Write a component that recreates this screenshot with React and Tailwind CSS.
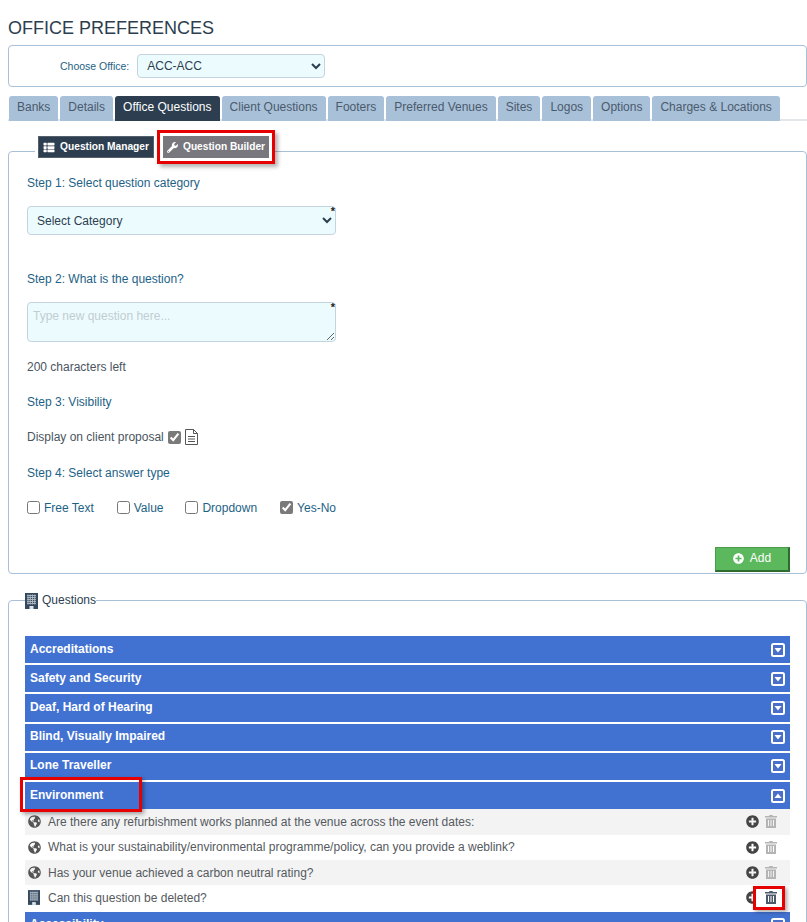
import React from 'react';
import { FaThList, FaWrench, FaPlusCircle, FaGlobeAmericas } from 'react-icons/fa';

const tabs = ['Banks', 'Details', 'Office Questions', 'Client Questions', 'Footers', 'Preferred Venues', 'Sites', 'Logos', 'Options', 'Charges & Locations'];

const categories = ['Accreditations', 'Safety and Security', 'Deaf, Hard of Hearing', 'Blind, Visually Impaired', 'Lone Traveller'];

const questions = [
    { text: 'Are there any refurbishment works planned at the venue across the event dates:', icon: 'globe' },
    { text: 'What is your sustainability/environmental programme/policy, can you provide a weblink?', icon: 'globe' },
    { text: 'Has your venue achieved a carbon neutral rating?', icon: 'globe' },
    { text: 'Can this question be deleted?', icon: 'building', deletable: true },
];

const BuildingIcon = ({ className }) => (
    <svg viewBox="0 0 13 16" className={className} fill="none">
        <rect x="0" y="0" width="13" height="16" fill="#34495e" />
        <path d="M2 2.5h9M2 4.5h9M2 6.5h9M2 8.5h9M2 10.5h9M3 1.5v10M5.25 1.5v10M7.5 1.5v10M9.75 1.5v10" stroke="#a9b4bf" strokeWidth="1" />
        <rect x="4.5" y="13" width="4" height="3" fill="#dfe4e8" />
    </svg>
);

const TrashIcon = ({ className }) => (
    <svg viewBox="0 0 12 13" className={className} fill="currentColor">
        <path d="M4.5 0h3l.5 1H12v1.5H0V1h4z" />
        <path fillRule="evenodd" d="M1 3.5h10V13H1zM3 5v6h1V5zM5.5 5v6h1V5zM8 5v6h1V5z" />
    </svg>
);

const DocIcon = ({ className }) => (
    <svg viewBox="0 0 13 16" className={className} fill="none" stroke="#555555" strokeWidth="1">
        <path d="M.5.5h8l4 4v11H.5z" />
        <path d="M8.5.5v4h4M3 7.5h7M3 10h7M3 12.5h7" />
    </svg>
);

const ToggleIcon = ({ open }) => (
    <svg viewBox="0 0 14 14" className="h-[14px] w-[14px]">
        <rect x="1" y="1" width="12" height="12" rx="1.5" fill="#4a6fc9" stroke="#ffffff" strokeWidth="2" />
        <path d={open ? 'M7 4.5l3.5 4.5h-7z' : 'M3.5 5h7L7 9.5z'} fill="#ffffff" />
    </svg>
);

const Required = () => (
    <span className="absolute right-[1px] top-[0px] text-[11px] font-bold leading-[11px] text-[#222]">*</span>
);

const Check = ({ label, checked, className }) => (
    <label className={`flex items-center whitespace-nowrap ${className}`}>
        <input type="checkbox" defaultChecked={checked} className="m-0 h-[13px] w-[13px] accent-[#7a7a7a]" />
        <span className="ml-1 mt-[1px]">{label}</span>
    </label>
);

const CategoryRow = ({ label, open }) => (
    <div className="flex h-[27.2px] items-center justify-between bg-[#4272d1] pr-[5px] text-xs font-bold text-white">
        <span className="pb-[2px] pl-[5px]">{label}</span>
        <ToggleIcon open={open} />
    </div>
);

const App = () => {
    return (
        <div className="h-[922px] overflow-hidden bg-white pl-2 font-['Liberation_Sans',Arial,sans-serif] text-xs text-[#1d6285]">
            <h1 className="h-[45px] pt-[18px] text-[18px] leading-[21px] text-[#2c3e50]">OFFICE PREFERENCES</h1>

            <div className="flex h-[42px] items-center rounded border border-[#a9c0d9] pl-[51px]">
                <span className="text-[10.5px]">Choose Office:</span>
                <select className="ml-2 h-[24px] w-[188px] rounded border border-[#c5d3de] bg-[#ecfcfe] pl-[5px] text-xs text-[#2c3e50]" defaultValue="ACC-ACC">
                    <option>ACC-ACC</option>
                </select>
            </div>

            <div className="mt-[9px] flex h-[25px] gap-[2px] border-b-2 border-[#e4e7ea] pl-px">
                {tabs.map((tab) => (
                    <div
                        key={tab}
                        className={`flex h-[25px] items-center rounded-t-[3px] px-2 pb-1 ${tab === 'Office Questions' ? 'bg-[#2c3e50] text-white' : 'bg-[#a9c0d9] text-[#4a5b6c]'}`}
                    >
                        {tab}
                    </div>
                ))}
            </div>

            <fieldset className="mt-[15px] h-[438px] rounded border border-[#a9c0d9] px-[18px]">
                <legend className="ml-[8px] flex h-[30px] items-start gap-[9px] px-[3px]">
                    <span className="flex h-[22px] w-[116px] items-center justify-center gap-[5px] border border-[#54616d] bg-[#2c3e50] text-[10.2px] font-bold text-white">
                        <FaThList className="h-[11px] w-[12px]" />
                        Question Manager
                    </span>
                    <span className="flex h-[22px] w-[106px] items-center justify-center gap-[5px] bg-[#77777d] text-[10.2px] font-bold text-white shadow-[0_0_0_3px_#ffffff,0_0_0_6px_#e60000,3px_3px_4px_6px_rgba(0,0,0,0.3)]">
                        <FaWrench className="h-[11px] w-[11px]" />
                        Question Builder
                    </span>
                </legend>

                <p className="mt-[9px] h-[14px]">Step 1: Select question category</p>
                <div className="relative mt-[17px] h-[29px] w-[309px]">
                    <select className="h-full w-full rounded border border-[#c5d3de] bg-[#ecfcfe] pl-[5px] text-xs text-[#2c3e50]" defaultValue="Select Category">
                        <option>Select Category</option>
                    </select>
                    <Required />
                </div>

                <p className="mt-[36px] h-[14px]">Step 2: What is the question?</p>
                <div className="relative mt-[17px] h-[40px] w-[309px]">
                    <textarea
                        placeholder="Type new question here..."
                        className="block h-full w-full rounded border border-[#c5d3de] bg-[#ecfcfe] px-[5px] py-[5px] text-xs placeholder:text-[#c2ccd3]"
                    />
                    <Required />
                </div>

                <p className="mt-[17px] h-[14px] text-[#4a5560]">200 characters left</p>
                <p className="mt-[21px] h-[14px]">Step 3: Visibility</p>
                <div className="mt-[22px] flex h-[14px] items-center text-[#4a5560]">
                    <span>Display on client proposal</span>
                    <input type="checkbox" defaultChecked className="m-0 ml-1 h-[13px] w-[13px] accent-[#7a7a7a]" />
                    <DocIcon className="ml-[4px] h-[16px] w-[13px]" />
                </div>
                <p className="mt-[21px] h-[14px]">Step 4: Select answer type</p>
                <div className="mt-[21px] flex h-[14px] w-[309px]">
                    <Check label="Free Text" className="w-[90px]" />
                    <Check label="Value" className="w-[69px]" />
                    <Check label="Dropdown" className="w-[95px]" />
                    <Check label="Yes-No" checked />
                </div>

                <div className="-mr-[2px] mt-[33px] flex justify-end">
                    <button className="flex h-[25px] w-[75px] items-center justify-center gap-[6px] border-b-2 border-l border-r-2 border-t border-[#4a9a4a] border-b-[#2e6b2e] border-r-[#2e6b2e] bg-[#5cb85c] pb-[2px] text-xs text-white">
                        <FaPlusCircle className="h-[11px] w-[11px]" />
                        Add
                    </button>
                </div>
            </fieldset>

            <fieldset className="mt-[18px] h-[400px] rounded border border-[#a9c0d9] pl-4 pr-4">
                <legend className="flex h-[17px] items-center gap-[4px] text-[#2c3e50]">
                    <BuildingIcon className="h-[16px] w-[13px]" />
                    <span className="pb-[2px]">Questions</span>
                </legend>

                <div className="mt-[27px] flex flex-col gap-[2px]">
                    {categories.map((cat) => (
                        <CategoryRow key={cat} label={cat} />
                    ))}
                    <div className="relative">
                        <CategoryRow label="Environment" open />
                        <div className="pointer-events-none absolute left-[-5px] top-[-5px] h-[35px] w-[122px] border-[3px] border-[#e60000] shadow-[2px_2px_4px_rgba(0,0,0,0.35)]" />
                    </div>
                </div>

                <div>
                    {questions.map((q, i) => (
                        <div key={q.text} className={`flex h-[25.4px] items-center pl-[3px] pr-[13px] text-[#555a60] ${i % 2 === 0 ? 'bg-[#f3f3f3]' : 'bg-white'}`}>
                            {q.icon === 'globe' ? (
                                <FaGlobeAmericas className="h-[13px] w-[13px] text-[#555]" />
                            ) : (
                                <BuildingIcon className="h-[15px] w-[12px]" />
                            )}
                            <span className={`flex-1 ${q.icon === 'globe' ? 'ml-[7px]' : 'ml-[8px]'}`}>{q.text}</span>
                            <FaPlusCircle className="h-[13px] w-[13px] text-[#444]" />
                            <span className="relative ml-[6px]">
                                {q.deletable && (
                                    <span className="absolute left-[-12px] top-[-5px] h-[24px] w-[32px] border-[3px] border-[#e60000] bg-white shadow-[2px_2px_4px_rgba(0,0,0,0.35)]" />
                                )}
                                <TrashIcon className={`relative h-[13px] w-[12px] ${q.deletable ? 'text-[#4a5a6a]' : 'text-[#b4b4b4]'}`} />
                            </span>
                        </div>
                    ))}
                </div>

                <div className="mt-[1px]">
                    <CategoryRow label="Accessibility" />
                </div>
            </fieldset>
        </div>
    );
};

export default App;
